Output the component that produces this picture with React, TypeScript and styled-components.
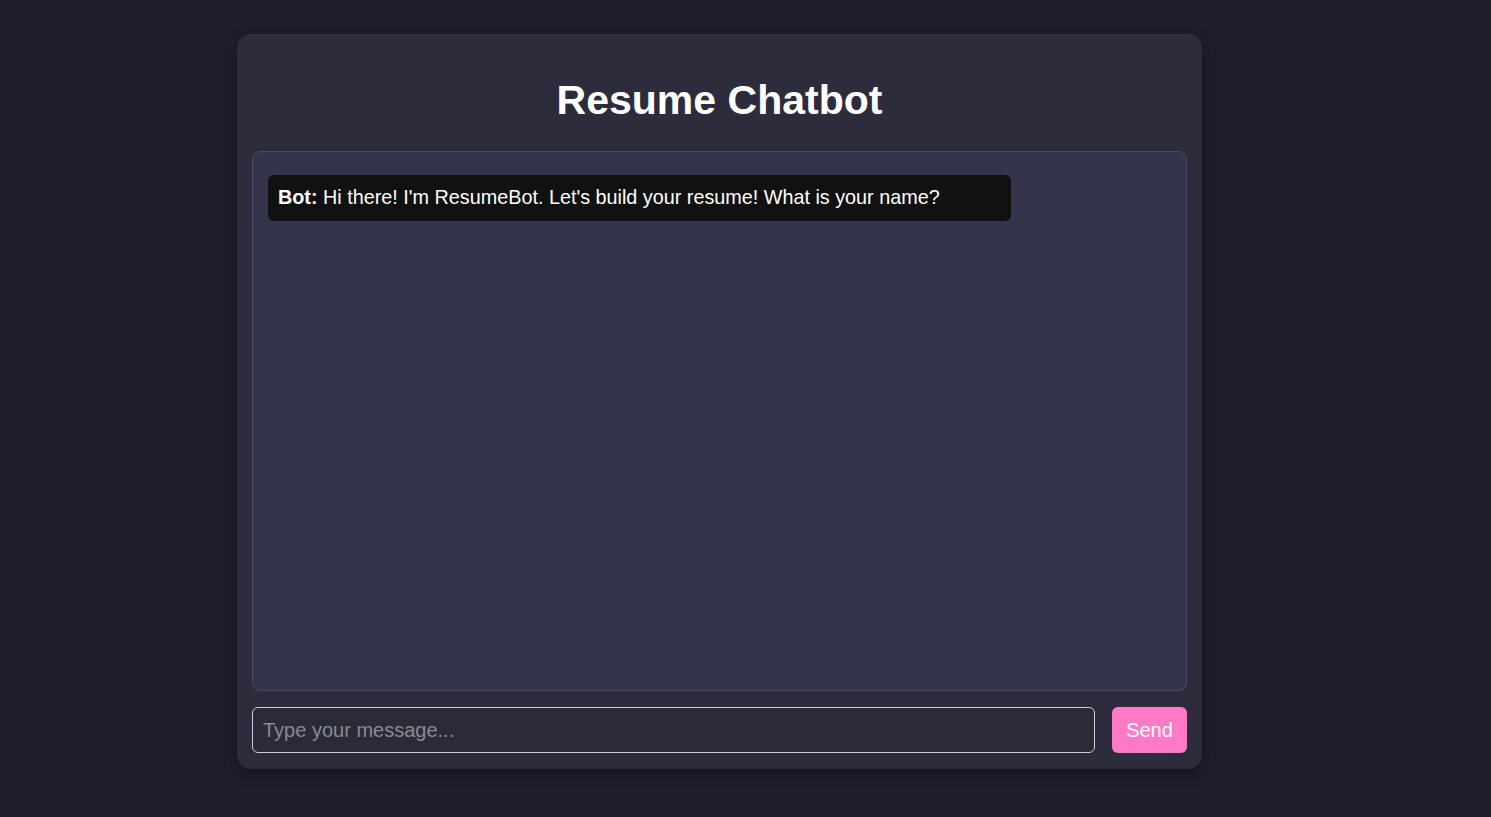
import React, { useState } from 'react'
import styled, { createGlobalStyle } from 'styled-components'

type Message = { from: 'bot' | 'user'; text: string }

const GlobalStyle = createGlobalStyle`
  html, body {
    margin: 0;
    padding: 0;
    background-color: #1e1e2e;
    font-family: "Liberation Sans", Arial, sans-serif;
  }
`

const App: React.FC = () => {
  const [messages, setMessages] = useState<Message[]>([
    { from: 'bot', text: "Hi there! I'm ResumeBot. Let's build your resume! What is your name?" },
  ])
  const [value, setValue] = useState('')

  const send = (): void => {
    if (!value.trim()) return
    setMessages([...messages, { from: 'user', text: value }])
    setValue('')
  }

  return (
    <StyledPage>
      <GlobalStyle />
      <StyledCard>
        <StyledTitle>Resume Chatbot</StyledTitle>
        <StyledChat>
          {messages.map((m, i) => (
            <StyledBubble key={i}>
              <b>{m.from === 'bot' ? 'Bot:' : 'You:'}</b> {m.text}
            </StyledBubble>
          ))}
        </StyledChat>
        <StyledInputRow>
          <StyledInput
            placeholder="Type your message..."
            value={value}
            onChange={(e) => setValue(e.target.value)}
            onKeyDown={(e) => e.key === 'Enter' && send()}
          />
          <StyledSendBtn type="button" onClick={send}>Send</StyledSendBtn>
        </StyledInputRow>
      </StyledCard>
    </StyledPage>
  )
}

const StyledPage = styled.div`
  display: flex;
  justify-content: center;
  align-items: flex-start;
  min-height: 817px;
  padding: 34px 52px 0 0;
  box-sizing: border-box;
`

const StyledCard = styled.section`
  width: 965px;
  height: 735px;
  box-sizing: border-box;
  padding: 15px;
  display: flex;
  flex-direction: column;
  background-color: #2c2c3c;
  border-radius: 14px;
  box-shadow: 0 4px 14px rgba(0, 0, 0, 0.35);
`

const StyledTitle = styled.h1`
  margin: 28px 0 28px;
  text-align: center;
  font-size: 41px;
  line-height: 46px;
  font-weight: 700;
  color: #ffffff;
`

const StyledChat = styled.div`
  height: 540px;
  flex-shrink: 0;
  box-sizing: border-box;
  padding: 23px 15px 15px;
  background-color: #34344a;
  border: 1px solid #4a4a60;
  border-radius: 8px;
  overflow-y: auto;
`

const StyledBubble = styled.div`
  width: 743px;
  box-sizing: border-box;
  padding: 9px 10px 11px;
  margin-bottom: 10px;
  background-color: #111111;
  border-radius: 6px;
  color: #ffffff;
  font-size: 19.8px;
  line-height: 26px;
`

const StyledInputRow = styled.div`
  display: flex;
  gap: 17px;
  margin-top: 16px;
`

const StyledInput = styled.input`
  flex: 1;
  height: 46px;
  box-sizing: border-box;
  padding: 0 10px;
  background-color: #2a2a38;
  border: 1px solid #cfcfd6;
  border-radius: 6px;
  color: #ffffff;
  font-family: inherit;
  font-size: 20px;
  outline: none;
  &::placeholder {
    color: #8a8a8f;
  }
`

const StyledSendBtn = styled.button`
  width: 75px;
  height: 46px;
  border: none;
  border-radius: 6px;
  background-color: #ff7ac6;
  color: #ffffff;
  font-family: inherit;
  font-size: 20px;
  cursor: pointer;
`

export default App
